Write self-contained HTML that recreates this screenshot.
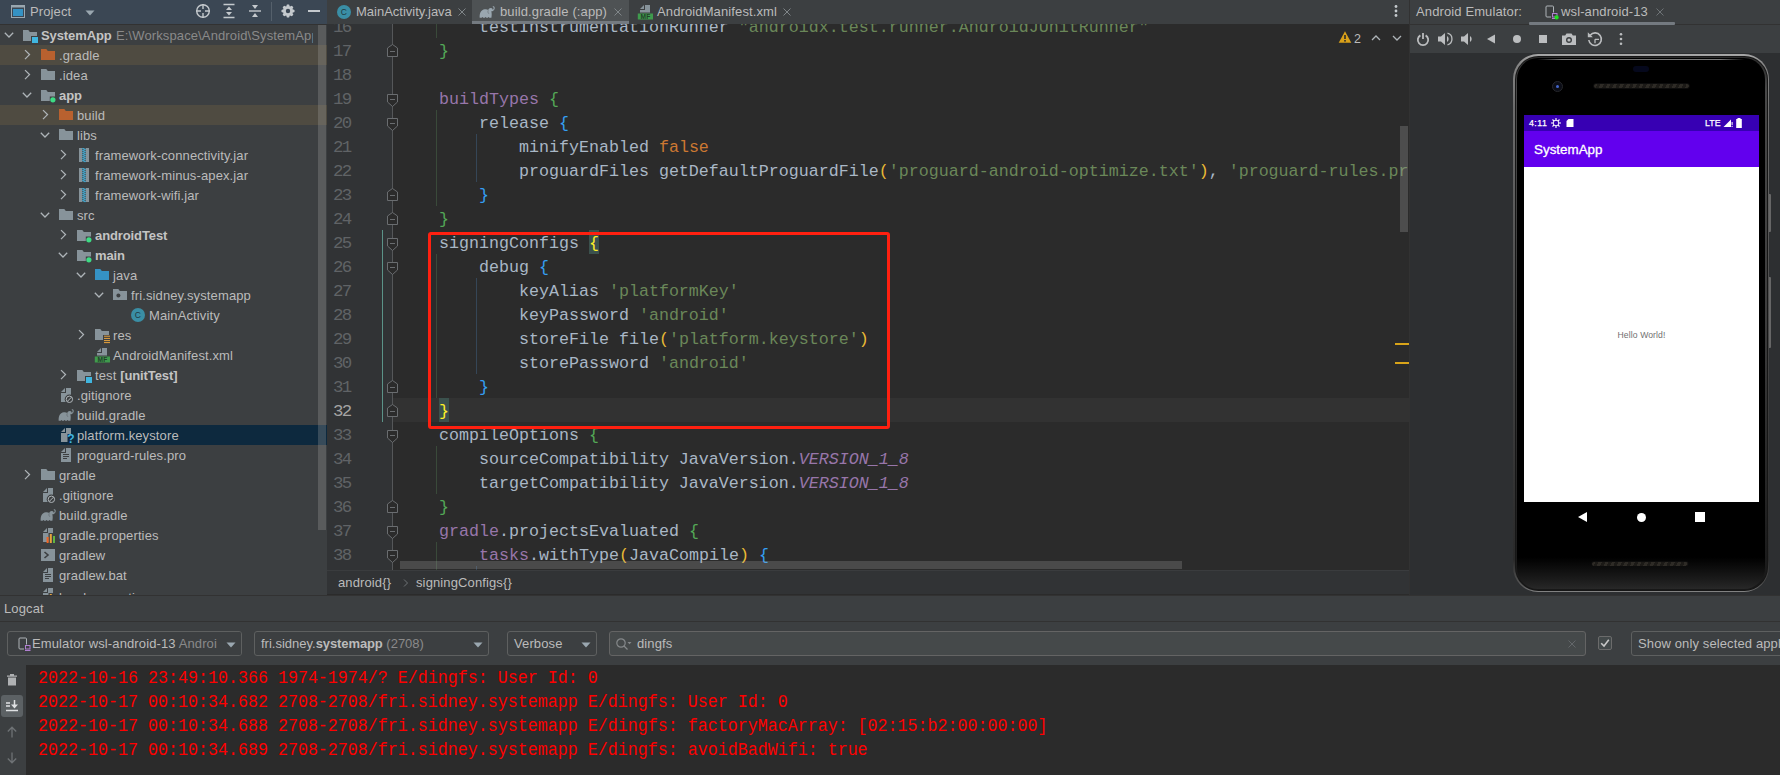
<!DOCTYPE html>
<html lang="en"><head><meta charset="utf-8"><title>SystemApp - build.gradle (:app)</title>
<style>
*{box-sizing:border-box;margin:0;padding:0}
html,body{width:1780px;height:775px;overflow:hidden;background:#3c3f41}
body{position:relative;font-family:"Liberation Sans",sans-serif;font-size:13px;letter-spacing:.12px;color:#bbbbbb;-webkit-font-smoothing:antialiased}
.abs{position:absolute}
svg{position:absolute;overflow:visible}
#proj{position:absolute;left:0;top:0;width:327px;height:595px;background:#3c3f41;overflow:hidden}
#projhead{position:absolute;left:0;top:0;width:327px;height:24px;background:#3b4754}
#projhead .sepline{position:absolute;left:0;top:24px;width:327px;height:1px;background:#323232}
.row{position:absolute;left:0;width:327px;height:20px;line-height:20px;white-space:nowrap}
.row.excl{background:#4f4b41}
.row.sel{background:#0d293e}
.row span.t{position:absolute;top:1px;color:#bbbbbb}
b{font-weight:bold;letter-spacing:-.1px}
.row b{color:#c4c4c4}
.gray,.row span.t.gray{color:#8a8a8a}
#projscroll{position:absolute;left:318px;top:25px;width:8px;height:505px;background:rgba(166,166,166,.28)}
#editor{position:absolute;left:327px;top:0;width:1082px;height:595px;background:#2b2b2b;overflow:hidden}
#tabs{position:absolute;left:0;top:0;width:1082px;height:24px;background:#3c3f41;z-index:5}
#tabs .tab{position:absolute;top:0;height:24px;line-height:23px;color:#bbbbbb;white-space:nowrap}
#gutter{position:absolute;left:0;top:24px;width:65px;height:546px;background:#313335}
.ln{position:absolute;left:0;width:1082px;height:24px}
.code,.num{font-family:"Liberation Mono",monospace;font-size:16.67px;line-height:24px;white-space:pre;position:absolute;top:2px;height:24px}
.code{left:72px;color:#a9b7c6;letter-spacing:0}
.num{left:6px;color:#606366;font-size:17.4px;letter-spacing:-1.7px}
.p{color:#9876aa}.k{color:#cc7832}.s{color:#6a8759}.g{color:#54a857}.bl{color:#359ff4}.y{color:#e8ba36}.m{color:#ffef28}.i{font-style:italic;color:#9876aa}
#crumbs{position:absolute;left:0;top:570px;width:1082px;height:24px;background:#313335;border-top:1px solid #3a3c3e;line-height:24px;z-index:4}
#emu{position:absolute;left:1409px;top:0;width:371px;height:595px;background:#2d2f31;overflow:hidden}
#logcat{position:absolute;left:0;top:595px;width:1780px;height:180px;background:#3c3f41;overflow:hidden}
.combo{position:absolute;top:36px;height:25px;border:1px solid #5e6060;border-radius:3px;background:#3c3f41;line-height:23px;white-space:nowrap;overflow:hidden;color:#bbbbbb}
.logline{position:absolute;left:38px;font-family:"Liberation Mono",monospace;font-size:16.67px;line-height:24px;height:24px;color:#ff0000;white-space:pre;letter-spacing:0;transform:scaleY(1.13);transform-origin:0 16.5px}
</style></head>
<body>
<div id="proj">
<div id="projhead">
<svg style="left:10px;top:4px" width="16" height="16" viewBox="0 0 16 16"><rect x="1.5" y="1.5" width="13" height="12" fill="none" stroke="#9aa7b0" stroke-width="1"/><rect x="1" y="1" width="14" height="2.5" fill="#9aa7b0"/><rect x="3" y="5" width="10" height="7" fill="#3592c4"/></svg>
<span class="abs" style="left:30px;top:0;line-height:23px;color:#bbbbbb">Project</span>
<svg style="left:85px;top:10px" width="10" height="6" viewBox="0 0 10 6"><path d="M0.5 0.5 H9.5 L5 5.5 Z" fill="#9aa7b0"/></svg>
<svg style="left:195px;top:3px" width="16" height="16" viewBox="0 0 16 16"><circle cx="8" cy="8" r="6.3" fill="none" stroke="#c4c9cd" stroke-width="1.4"/><path d="M8 1v5M8 10v5M1 8h5M10 8h5" stroke="#c4c9cd" stroke-width="1.4"/></svg>
<svg style="left:221px;top:3px" width="16" height="16" viewBox="0 0 16 16"><path d="M2.5 1.5h11M2.5 14.5h11" stroke="#c4c9cd" stroke-width="1.4"/><path d="M8 3.5 L11 7 H5 Z M8 12.5 L11 9 H5 Z" fill="#c4c9cd"/></svg>
<svg style="left:247px;top:3px" width="16" height="16" viewBox="0 0 16 16"><path d="M2 8h12" stroke="#c4c9cd" stroke-width="1.4"/><path d="M8 6 L11 2 H5 Z M8 10 L11 14 H5 Z" fill="#c4c9cd"/></svg>
<div class="abs" style="left:271px;top:2px;width:1px;height:19px;background:#55606b"></div>
<svg style="left:280px;top:3px" width="16" height="16" viewBox="0 0 16 16"><path d="M12.56 6.21 L14.51 6.92 L14.51 9.08 L12.56 9.79 L12.49 9.96 L13.37 11.84 L11.84 13.37 L9.96 12.49 L9.79 12.56 L9.08 14.51 L6.92 14.51 L6.21 12.56 L6.04 12.49 L4.16 13.37 L2.63 11.84 L3.51 9.96 L3.44 9.79 L1.49 9.08 L1.49 6.92 L3.44 6.21 L3.51 6.04 L2.63 4.16 L4.16 2.63 L6.04 3.51 L6.21 3.44 L6.92 1.49 L9.08 1.49 L9.79 3.44 L9.96 3.51 L11.84 2.63 L13.37 4.16 L12.49 6.04 Z M8 5.8 A2.2 2.2 0 1 0 8 10.2 A2.2 2.2 0 1 0 8 5.8 Z" fill="#c4c9cd" fill-rule="evenodd"/></svg>
<div class="abs" style="left:308px;top:10px;width:12px;height:2px;background:#c4c9cd"></div>
<div class="sepline"></div>
</div>
<div class="row " style="top:25px">
<svg style="left:1px;top:2px" width="16" height="16" viewBox="0 0 16 16"><path d="M3.8 5.8 L8 10 L12.2 5.8" fill="none" stroke="#aeb4b8" stroke-width="1.3"/></svg>
<svg style="left:22px;top:2px" width="16" height="16" viewBox="0 0 16 16"><path d="M1 3 H6.3 L7.8 5 H15 V9 H9 V14 H1 Z" fill="#87939a"/><rect x="10" y="10" width="6" height="6" fill="#40b6e0"/></svg>
<span class="t" style="left:41px"><b>SystemApp</b></span>
<span class="t gray" style="left:116px;width:197px;overflow:hidden">E:\Workspace\Android\SystemApp</span>
</div>
<div class="row excl" style="top:45px">
<svg style="left:19px;top:2px" width="16" height="16" viewBox="0 0 16 16"><path d="M6 3.1 L10.5 7.6 L6 12.1" fill="none" stroke="#aeb4b8" stroke-width="1.3"/></svg>
<svg style="left:40px;top:2px" width="16" height="16" viewBox="0 0 16 16"><path d="M1 2 H6.3 L7.8 4 H15 V13 H1 Z" fill="#b9612f"/></svg>
<span class="t" style="left:59px">.gradle</span>
</div>
<div class="row " style="top:65px">
<svg style="left:19px;top:2px" width="16" height="16" viewBox="0 0 16 16"><path d="M6 3.1 L10.5 7.6 L6 12.1" fill="none" stroke="#aeb4b8" stroke-width="1.3"/></svg>
<svg style="left:40px;top:2px" width="16" height="16" viewBox="0 0 16 16"><path d="M1 2 H6.3 L7.8 4 H15 V13 H1 Z" fill="#87939a"/></svg>
<span class="t" style="left:59px">.idea</span>
</div>
<div class="row " style="top:85px">
<svg style="left:19px;top:2px" width="16" height="16" viewBox="0 0 16 16"><path d="M3.8 5.8 L8 10 L12.2 5.8" fill="none" stroke="#aeb4b8" stroke-width="1.3"/></svg>
<svg style="left:40px;top:2px" width="16" height="16" viewBox="0 0 16 16"><path d="M1 3 H6.3 L7.8 5 H15 V9.4 H9.8 V14 H1 Z" fill="#87939a"/><circle cx="12.9" cy="12.8" r="2.6" fill="#3ddc84"/></svg>
<span class="t" style="left:59px"><b>app</b></span>
</div>
<div class="row excl" style="top:105px">
<svg style="left:37px;top:2px" width="16" height="16" viewBox="0 0 16 16"><path d="M6 3.1 L10.5 7.6 L6 12.1" fill="none" stroke="#aeb4b8" stroke-width="1.3"/></svg>
<svg style="left:58px;top:2px" width="16" height="16" viewBox="0 0 16 16"><path d="M1 2 H6.3 L7.8 4 H15 V13 H1 Z" fill="#b9612f"/></svg>
<span class="t" style="left:77px">build</span>
</div>
<div class="row " style="top:125px">
<svg style="left:37px;top:2px" width="16" height="16" viewBox="0 0 16 16"><path d="M3.8 5.8 L8 10 L12.2 5.8" fill="none" stroke="#aeb4b8" stroke-width="1.3"/></svg>
<svg style="left:58px;top:2px" width="16" height="16" viewBox="0 0 16 16"><path d="M1 2 H6.3 L7.8 4 H15 V13 H1 Z" fill="#87939a"/></svg>
<span class="t" style="left:77px">libs</span>
</div>
<div class="row " style="top:145px">
<svg style="left:55px;top:2px" width="16" height="16" viewBox="0 0 16 16"><path d="M6 3.1 L10.5 7.6 L6 12.1" fill="none" stroke="#aeb4b8" stroke-width="1.3"/></svg>
<svg style="left:76px;top:2px" width="16" height="16" viewBox="0 0 16 16"><rect x="3" y="1" width="3" height="14" fill="#87939a"/><rect x="10" y="1" width="3" height="14" fill="#87939a"/><rect x="6" y="1" width="4" height="14" fill="#4c5a63"/><path d="M6.2 1.6h2.2" stroke="#40b6e0" stroke-width="0.9"/><path d="M7.6 2.6h2.2" stroke="#40b6e0" stroke-width="0.9"/><path d="M6.2 3.6h2.2" stroke="#40b6e0" stroke-width="0.9"/><path d="M7.6 4.6h2.2" stroke="#40b6e0" stroke-width="0.9"/><path d="M6.2 5.6h2.2" stroke="#40b6e0" stroke-width="0.9"/><path d="M7.6 6.6h2.2" stroke="#40b6e0" stroke-width="0.9"/><path d="M6.2 7.6h2.2" stroke="#40b6e0" stroke-width="0.9"/><path d="M7.6 8.6h2.2" stroke="#40b6e0" stroke-width="0.9"/><path d="M6.2 9.6h2.2" stroke="#40b6e0" stroke-width="0.9"/><path d="M7.6 10.6h2.2" stroke="#40b6e0" stroke-width="0.9"/><path d="M6.2 11.6h2.2" stroke="#40b6e0" stroke-width="0.9"/><path d="M7.6 12.6h2.2" stroke="#40b6e0" stroke-width="0.9"/><path d="M6.2 13.6h2.2" stroke="#40b6e0" stroke-width="0.9"/><path d="M7.6 14.6h2.2" stroke="#40b6e0" stroke-width="0.9"/></svg>
<span class="t" style="left:95px">framework-connectivity.jar</span>
</div>
<div class="row " style="top:165px">
<svg style="left:55px;top:2px" width="16" height="16" viewBox="0 0 16 16"><path d="M6 3.1 L10.5 7.6 L6 12.1" fill="none" stroke="#aeb4b8" stroke-width="1.3"/></svg>
<svg style="left:76px;top:2px" width="16" height="16" viewBox="0 0 16 16"><rect x="3" y="1" width="3" height="14" fill="#87939a"/><rect x="10" y="1" width="3" height="14" fill="#87939a"/><rect x="6" y="1" width="4" height="14" fill="#4c5a63"/><path d="M6.2 1.6h2.2" stroke="#40b6e0" stroke-width="0.9"/><path d="M7.6 2.6h2.2" stroke="#40b6e0" stroke-width="0.9"/><path d="M6.2 3.6h2.2" stroke="#40b6e0" stroke-width="0.9"/><path d="M7.6 4.6h2.2" stroke="#40b6e0" stroke-width="0.9"/><path d="M6.2 5.6h2.2" stroke="#40b6e0" stroke-width="0.9"/><path d="M7.6 6.6h2.2" stroke="#40b6e0" stroke-width="0.9"/><path d="M6.2 7.6h2.2" stroke="#40b6e0" stroke-width="0.9"/><path d="M7.6 8.6h2.2" stroke="#40b6e0" stroke-width="0.9"/><path d="M6.2 9.6h2.2" stroke="#40b6e0" stroke-width="0.9"/><path d="M7.6 10.6h2.2" stroke="#40b6e0" stroke-width="0.9"/><path d="M6.2 11.6h2.2" stroke="#40b6e0" stroke-width="0.9"/><path d="M7.6 12.6h2.2" stroke="#40b6e0" stroke-width="0.9"/><path d="M6.2 13.6h2.2" stroke="#40b6e0" stroke-width="0.9"/><path d="M7.6 14.6h2.2" stroke="#40b6e0" stroke-width="0.9"/></svg>
<span class="t" style="left:95px">framework-minus-apex.jar</span>
</div>
<div class="row " style="top:185px">
<svg style="left:55px;top:2px" width="16" height="16" viewBox="0 0 16 16"><path d="M6 3.1 L10.5 7.6 L6 12.1" fill="none" stroke="#aeb4b8" stroke-width="1.3"/></svg>
<svg style="left:76px;top:2px" width="16" height="16" viewBox="0 0 16 16"><rect x="3" y="1" width="3" height="14" fill="#87939a"/><rect x="10" y="1" width="3" height="14" fill="#87939a"/><rect x="6" y="1" width="4" height="14" fill="#4c5a63"/><path d="M6.2 1.6h2.2" stroke="#40b6e0" stroke-width="0.9"/><path d="M7.6 2.6h2.2" stroke="#40b6e0" stroke-width="0.9"/><path d="M6.2 3.6h2.2" stroke="#40b6e0" stroke-width="0.9"/><path d="M7.6 4.6h2.2" stroke="#40b6e0" stroke-width="0.9"/><path d="M6.2 5.6h2.2" stroke="#40b6e0" stroke-width="0.9"/><path d="M7.6 6.6h2.2" stroke="#40b6e0" stroke-width="0.9"/><path d="M6.2 7.6h2.2" stroke="#40b6e0" stroke-width="0.9"/><path d="M7.6 8.6h2.2" stroke="#40b6e0" stroke-width="0.9"/><path d="M6.2 9.6h2.2" stroke="#40b6e0" stroke-width="0.9"/><path d="M7.6 10.6h2.2" stroke="#40b6e0" stroke-width="0.9"/><path d="M6.2 11.6h2.2" stroke="#40b6e0" stroke-width="0.9"/><path d="M7.6 12.6h2.2" stroke="#40b6e0" stroke-width="0.9"/><path d="M6.2 13.6h2.2" stroke="#40b6e0" stroke-width="0.9"/><path d="M7.6 14.6h2.2" stroke="#40b6e0" stroke-width="0.9"/></svg>
<span class="t" style="left:95px">framework-wifi.jar</span>
</div>
<div class="row " style="top:205px">
<svg style="left:37px;top:2px" width="16" height="16" viewBox="0 0 16 16"><path d="M3.8 5.8 L8 10 L12.2 5.8" fill="none" stroke="#aeb4b8" stroke-width="1.3"/></svg>
<svg style="left:58px;top:2px" width="16" height="16" viewBox="0 0 16 16"><path d="M1 2 H6.3 L7.8 4 H15 V13 H1 Z" fill="#87939a"/></svg>
<span class="t" style="left:77px">src</span>
</div>
<div class="row " style="top:225px">
<svg style="left:55px;top:2px" width="16" height="16" viewBox="0 0 16 16"><path d="M6 3.1 L10.5 7.6 L6 12.1" fill="none" stroke="#aeb4b8" stroke-width="1.3"/></svg>
<svg style="left:76px;top:2px" width="16" height="16" viewBox="0 0 16 16"><path d="M1 3 H6.3 L7.8 5 H15 V9.4 H9.8 V14 H1 Z" fill="#87939a"/><circle cx="12.9" cy="12.8" r="2.6" fill="#3ddc84"/></svg>
<span class="t" style="left:95px"><b>androidTest</b></span>
</div>
<div class="row " style="top:245px">
<svg style="left:55px;top:2px" width="16" height="16" viewBox="0 0 16 16"><path d="M3.8 5.8 L8 10 L12.2 5.8" fill="none" stroke="#aeb4b8" stroke-width="1.3"/></svg>
<svg style="left:76px;top:2px" width="16" height="16" viewBox="0 0 16 16"><path d="M1 3 H6.3 L7.8 5 H15 V9.4 H9.8 V14 H1 Z" fill="#87939a"/><circle cx="12.9" cy="12.8" r="2.6" fill="#3ddc84"/></svg>
<span class="t" style="left:95px"><b>main</b></span>
</div>
<div class="row " style="top:265px">
<svg style="left:73px;top:2px" width="16" height="16" viewBox="0 0 16 16"><path d="M3.8 5.8 L8 10 L12.2 5.8" fill="none" stroke="#aeb4b8" stroke-width="1.3"/></svg>
<svg style="left:94px;top:2px" width="16" height="16" viewBox="0 0 16 16"><path d="M1 2 H6.3 L7.8 4 H15 V13 H1 Z" fill="#3592c4"/></svg>
<span class="t" style="left:113px">java</span>
</div>
<div class="row " style="top:285px">
<svg style="left:91px;top:2px" width="16" height="16" viewBox="0 0 16 16"><path d="M3.8 5.8 L8 10 L12.2 5.8" fill="none" stroke="#aeb4b8" stroke-width="1.3"/></svg>
<svg style="left:112px;top:2px" width="16" height="16" viewBox="0 0 16 16"><path d="M1 2 H6.3 L7.8 4 H15 V13 H1 Z" fill="#87939a"/><circle cx="6.4" cy="8.6" r="2" fill="#3c3f41"/></svg>
<span class="t" style="left:131px">fri.sidney.systemapp</span>
</div>
<div class="row " style="top:305px">
<svg style="left:130px;top:2px" width="16" height="16" viewBox="0 0 16 16"><circle cx="8" cy="8" r="7" fill="#3a8ea5"/><text x="8" y="11" text-anchor="middle" font-family="Liberation Sans,sans-serif" font-size="8.5" fill="#1f3840">C</text></svg>
<span class="t" style="left:149px">MainActivity</span>
</div>
<div class="row " style="top:325px">
<svg style="left:73px;top:2px" width="16" height="16" viewBox="0 0 16 16"><path d="M6 3.1 L10.5 7.6 L6 12.1" fill="none" stroke="#aeb4b8" stroke-width="1.3"/></svg>
<svg style="left:94px;top:2px" width="16" height="16" viewBox="0 0 16 16"><path d="M1 2 H6.3 L7.8 4 H15 V8 H9 V13 H1 Z" fill="#87939a"/><path d="M10 9.2h6M10 11.4h6M10 13.6h6M10 15.6h6" stroke="#e8a33d" stroke-width="1"/></svg>
<span class="t" style="left:113px">res</span>
</div>
<div class="row " style="top:345px">
<svg style="left:94px;top:2px" width="16" height="16" viewBox="0 0 16 16"><path d="M8 1 H13 V8.4 H3 V6 H8 Z" fill="#87939a"/><path d="M7 1 V5 H3 Z" fill="#87939a"/><rect x="0.8" y="9.5" width="15.2" height="6" fill="#3f9b4d"/><text x="8.4" y="15.1" text-anchor="middle" font-family="Liberation Sans,sans-serif" font-size="6.6" font-weight="bold" fill="#23402a">MF</text></svg>
<span class="t" style="left:113px">AndroidManifest.xml</span>
</div>
<div class="row " style="top:365px">
<svg style="left:55px;top:2px" width="16" height="16" viewBox="0 0 16 16"><path d="M6 3.1 L10.5 7.6 L6 12.1" fill="none" stroke="#aeb4b8" stroke-width="1.3"/></svg>
<svg style="left:76px;top:2px" width="16" height="16" viewBox="0 0 16 16"><path d="M1 3 H6.3 L7.8 5 H15 V9 H9 V14 H1 Z" fill="#87939a"/><rect x="10" y="10" width="6" height="6" fill="#40b6e0"/></svg>
<span class="t" style="left:95px">test <b>[unitTest]</b></span>
</div>
<div class="row " style="top:385px">
<svg style="left:58px;top:2px" width="16" height="16" viewBox="0 0 16 16"><path d="M8 1 H13 V15 H3 V6 H8 Z" fill="#87939a"/><path d="M7 1 V5 H3 Z" fill="#87939a"/><circle cx="11.4" cy="12.3" r="4.7" fill="#3c3f41"/><circle cx="11.4" cy="12.3" r="3.2" fill="none" stroke="#aeb4b8" stroke-width="1"/><path d="M9.2 14.5 L13.6 10.1" stroke="#aeb4b8" stroke-width="1"/></svg>
<span class="t" style="left:77px">.gitignore</span>
</div>
<div class="row " style="top:405px">
<svg style="left:58px;top:2px" width="16" height="16" viewBox="0 0 16 16"><path d="M0.7 13.7 C0.3 9.6 1.9 5.6 5.8 5.2 C7.2 5 8.4 5.3 9.2 6 C9.6 4.7 10.8 3.9 12.1 4.1 C13 4.3 13.6 4.9 13.7 5.7 C14.4 5.4 14.8 4.6 14.6 3.7 C14.5 3.1 14 2.8 13.6 2.9 C13.5 2.3 14.2 2 14.8 2.3 C15.7 2.8 16 4.1 15.5 5.3 C14.9 6.7 13.6 7.4 12.3 7.3 C12.9 9.2 12.8 11.6 12.4 13.7 H10.2 C10.2 12.6 9 12.6 9 13.7 H7.2 C7.2 12.6 6 12.6 6 13.7 H4 C4 12.6 2.8 12.6 2.8 13.7 Z" fill="#87939a"/><path d="M9.3 6.2 C8.6 7.6 8.9 9 10 9.8" fill="none" stroke="#3c3f41" stroke-width="0.6" opacity=".6"/></svg>
<span class="t" style="left:77px">build.gradle</span>
</div>
<div class="row sel" style="top:425px">
<svg style="left:58px;top:2px" width="16" height="16" viewBox="0 0 16 16"><path d="M8 1 H13 V7 H9.5 V15 H3 V6 H8 Z" fill="#87939a"/><path d="M7 1 V5 H3 Z" fill="#87939a"/><text x="13" y="16" text-anchor="middle" font-family="Liberation Sans,sans-serif" font-size="12" font-weight="bold" fill="#40b6e0">?</text></svg>
<span class="t" style="left:77px">platform.keystore</span>
</div>
<div class="row " style="top:445px">
<svg style="left:58px;top:2px" width="16" height="16" viewBox="0 0 16 16"><path d="M8 1 H13 V15 H3 V6 H8 Z" fill="#87939a"/><path d="M7 1 V5 H3 Z" fill="#87939a"/><path d="M5 7.5h6M5 9.5h6M5 11.5h4" stroke="#3c3f41" stroke-width="1"/></svg>
<span class="t" style="left:77px">proguard-rules.pro</span>
</div>
<div class="row " style="top:465px">
<svg style="left:19px;top:2px" width="16" height="16" viewBox="0 0 16 16"><path d="M6 3.1 L10.5 7.6 L6 12.1" fill="none" stroke="#aeb4b8" stroke-width="1.3"/></svg>
<svg style="left:40px;top:2px" width="16" height="16" viewBox="0 0 16 16"><path d="M1 2 H6.3 L7.8 4 H15 V13 H1 Z" fill="#87939a"/></svg>
<span class="t" style="left:59px">gradle</span>
</div>
<div class="row " style="top:485px">
<svg style="left:40px;top:2px" width="16" height="16" viewBox="0 0 16 16"><path d="M8 1 H13 V15 H3 V6 H8 Z" fill="#87939a"/><path d="M7 1 V5 H3 Z" fill="#87939a"/><circle cx="11.4" cy="12.3" r="4.7" fill="#3c3f41"/><circle cx="11.4" cy="12.3" r="3.2" fill="none" stroke="#aeb4b8" stroke-width="1"/><path d="M9.2 14.5 L13.6 10.1" stroke="#aeb4b8" stroke-width="1"/></svg>
<span class="t" style="left:59px">.gitignore</span>
</div>
<div class="row " style="top:505px">
<svg style="left:40px;top:2px" width="16" height="16" viewBox="0 0 16 16"><path d="M0.7 13.7 C0.3 9.6 1.9 5.6 5.8 5.2 C7.2 5 8.4 5.3 9.2 6 C9.6 4.7 10.8 3.9 12.1 4.1 C13 4.3 13.6 4.9 13.7 5.7 C14.4 5.4 14.8 4.6 14.6 3.7 C14.5 3.1 14 2.8 13.6 2.9 C13.5 2.3 14.2 2 14.8 2.3 C15.7 2.8 16 4.1 15.5 5.3 C14.9 6.7 13.6 7.4 12.3 7.3 C12.9 9.2 12.8 11.6 12.4 13.7 H10.2 C10.2 12.6 9 12.6 9 13.7 H7.2 C7.2 12.6 6 12.6 6 13.7 H4 C4 12.6 2.8 12.6 2.8 13.7 Z" fill="#87939a"/><path d="M9.3 6.2 C8.6 7.6 8.9 9 10 9.8" fill="none" stroke="#3c3f41" stroke-width="0.6" opacity=".6"/></svg>
<span class="t" style="left:59px">build.gradle</span>
</div>
<div class="row " style="top:525px">
<svg style="left:40px;top:2px" width="16" height="16" viewBox="0 0 16 16"><path d="M8 1 H13 V6 H8.5 V15 H3 V6 H8 Z" fill="#87939a"/><path d="M7 1 V5 H3 Z" fill="#87939a"/><rect x="6.6" y="10" width="2" height="6" fill="#f26522"/><rect x="9.8" y="7" width="2" height="9" fill="#e8a33d"/><rect x="13" y="9" width="2" height="7" fill="#62b543"/></svg>
<span class="t" style="left:59px">gradle.properties</span>
</div>
<div class="row " style="top:545px">
<svg style="left:40px;top:2px" width="16" height="16" viewBox="0 0 16 16"><rect x="1" y="2" width="14" height="12" fill="#87939a"/><path d="M4.5 5 L8 8 L4.5 11" fill="none" stroke="#3c3f41" stroke-width="1.6"/></svg>
<span class="t" style="left:59px">gradlew</span>
</div>
<div class="row " style="top:565px">
<svg style="left:40px;top:2px" width="16" height="16" viewBox="0 0 16 16"><path d="M8 1 H13 V15 H3 V6 H8 Z" fill="#87939a"/><path d="M7 1 V5 H3 Z" fill="#87939a"/><path d="M5 7.5h6M5 9.5h6M5 11.5h4" stroke="#3c3f41" stroke-width="1"/></svg>
<span class="t" style="left:59px">gradlew.bat</span>
</div>
<div class="row " style="top:585px">
<svg style="left:40px;top:2px" width="16" height="16" viewBox="0 0 16 16"><path d="M8 1 H13 V6 H8.5 V15 H3 V6 H8 Z" fill="#87939a"/><path d="M7 1 V5 H3 Z" fill="#87939a"/><rect x="6.6" y="10" width="2" height="6" fill="#f26522"/><rect x="9.8" y="7" width="2" height="9" fill="#e8a33d"/><rect x="13" y="9" width="2" height="7" fill="#62b543"/></svg>
<span class="t" style="left:59px;top:3px">local.properties</span>
</div>
<div id="projscroll"></div>
</div>
<div id="editor">
<div id="gutter"></div>
<div class="abs" style="left:65px;top:398px;width:1017px;height:24px;background:#323232"></div>
<div class="abs" style="left:262px;top:230px;width:10px;height:24px;background:#3b514d"></div>
<div class="abs" style="left:112px;top:398px;width:10px;height:24px;background:#3b514d"></div>
<div class="abs" style="left:55px;top:230px;width:1px;height:192px;background:#5b9388"></div>
<div class="abs" style="left:109px;top:14px;width:1px;height:24px;background:#3a4a3a"></div>
<div class="abs" style="left:109px;top:110px;width:1px;height:96px;background:#3a4a3a"></div>
<div class="abs" style="left:149px;top:134px;width:1px;height:48px;background:#354657"></div>
<div class="abs" style="left:109px;top:254px;width:1px;height:144px;background:#3a4a3a"></div>
<div class="abs" style="left:149px;top:278px;width:1px;height:96px;background:#354657"></div>
<div class="abs" style="left:109px;top:446px;width:1px;height:48px;background:#3a4a3a"></div>
<div class="abs" style="left:109px;top:542px;width:1px;height:48px;background:#3a4a3a"></div>
<div class="abs" style="left:149px;top:566px;width:1px;height:24px;background:#354657"></div>
<div class="ln" style="top:14px"><span class="num">16</span><span class="code">        testInstrumentationRunner <span class="s">"androidx.test.runner.AndroidJUnitRunner"</span></span></div>
<div class="ln" style="top:38px"><span class="num">17</span><span class="code">    <span class="g">}</span></span></div>
<div class="ln" style="top:62px"><span class="num">18</span><span class="code"></span></div>
<div class="ln" style="top:86px"><span class="num">19</span><span class="code">    <span class="p">buildTypes</span> <span class="g">{</span></span></div>
<div class="ln" style="top:110px"><span class="num">20</span><span class="code">        release <span class="bl">{</span></span></div>
<div class="ln" style="top:134px"><span class="num">21</span><span class="code">            minifyEnabled <span class="k">false</span></span></div>
<div class="ln" style="top:158px"><span class="num">22</span><span class="code">            proguardFiles getDefaultProguardFile<span class="y">(</span><span class="s">'proguard-android-optimize.txt'</span><span class="y">)</span>, <span class="s">'proguard-rules.pro'</span></span></div>
<div class="ln" style="top:182px"><span class="num">23</span><span class="code">        <span class="bl">}</span></span></div>
<div class="ln" style="top:206px"><span class="num">24</span><span class="code">    <span class="g">}</span></span></div>
<div class="ln" style="top:230px"><span class="num">25</span><span class="code">    signingConfigs <span class="m">{</span></span></div>
<div class="ln" style="top:254px"><span class="num">26</span><span class="code">        debug <span class="bl">{</span></span></div>
<div class="ln" style="top:278px"><span class="num">27</span><span class="code">            keyAlias <span class="s">'platformKey'</span></span></div>
<div class="ln" style="top:302px"><span class="num">28</span><span class="code">            keyPassword <span class="s">'android'</span></span></div>
<div class="ln" style="top:326px"><span class="num">29</span><span class="code">            storeFile file<span class="y">(</span><span class="s">'platform.keystore'</span><span class="y">)</span></span></div>
<div class="ln" style="top:350px"><span class="num">30</span><span class="code">            storePassword <span class="s">'android'</span></span></div>
<div class="ln" style="top:374px"><span class="num">31</span><span class="code">        <span class="bl">}</span></span></div>
<div class="ln" style="top:398px"><span class="num" style="color:#a4a3a3">32</span><span class="code">    <span class="m">}</span></span></div>
<div class="ln" style="top:422px"><span class="num">33</span><span class="code">    compileOptions <span class="g">{</span></span></div>
<div class="ln" style="top:446px"><span class="num">34</span><span class="code">        sourceCompatibility JavaVersion.<span class="i">VERSION_1_8</span></span></div>
<div class="ln" style="top:470px"><span class="num">35</span><span class="code">        targetCompatibility JavaVersion.<span class="i">VERSION_1_8</span></span></div>
<div class="ln" style="top:494px"><span class="num">36</span><span class="code">    <span class="g">}</span></span></div>
<div class="ln" style="top:518px"><span class="num">37</span><span class="code">    <span class="p">gradle</span>.projectsEvaluated <span class="g">{</span></span></div>
<div class="ln" style="top:542px"><span class="num">38</span><span class="code">        <span class="p">tasks</span>.withType<span class="y">(</span>JavaCompile<span class="y">)</span> <span class="bl">{</span></span></div>
<div class="ln" style="top:566px"><span class="num">39</span><span class="code">            options.compilerArgs</span></div>
<svg style="left:0;top:0" width="80" height="595" viewBox="0 0 80 595"><path d="M65.5 24V570" stroke="#555759" stroke-width="1"/><path d="M60.5 56.5 H70.5 V48 L65.5 44.5 L60.5 48 Z" fill="#2b2b2b" stroke="#6a6d70" stroke-width="1"/><path d="M63.0 51.5h5" stroke="#6a6d70" stroke-width="1"/><path d="M60.5 94.5 H70.5 V102 L65.5 106.5 L60.5 102 Z" fill="#2b2b2b" stroke="#6a6d70" stroke-width="1"/><path d="M63.0 99.5h5" stroke="#6a6d70" stroke-width="1"/><path d="M60.5 118.5 H70.5 V126 L65.5 130.5 L60.5 126 Z" fill="#2b2b2b" stroke="#6a6d70" stroke-width="1"/><path d="M63.0 123.5h5" stroke="#6a6d70" stroke-width="1"/><path d="M60.5 200.5 H70.5 V192 L65.5 188.5 L60.5 192 Z" fill="#2b2b2b" stroke="#6a6d70" stroke-width="1"/><path d="M63.0 195.5h5" stroke="#6a6d70" stroke-width="1"/><path d="M60.5 224.5 H70.5 V216 L65.5 212.5 L60.5 216 Z" fill="#2b2b2b" stroke="#6a6d70" stroke-width="1"/><path d="M63.0 219.5h5" stroke="#6a6d70" stroke-width="1"/><path d="M60.5 238.5 H70.5 V246 L65.5 250.5 L60.5 246 Z" fill="#2b2b2b" stroke="#6a6d70" stroke-width="1"/><path d="M63.0 243.5h5" stroke="#6a6d70" stroke-width="1"/><path d="M60.5 262.5 H70.5 V270 L65.5 274.5 L60.5 270 Z" fill="#2b2b2b" stroke="#6a6d70" stroke-width="1"/><path d="M63.0 267.5h5" stroke="#6a6d70" stroke-width="1"/><path d="M60.5 392.5 H70.5 V384 L65.5 380.5 L60.5 384 Z" fill="#2b2b2b" stroke="#6a6d70" stroke-width="1"/><path d="M63.0 387.5h5" stroke="#6a6d70" stroke-width="1"/><path d="M60.5 416.5 H70.5 V408 L65.5 404.5 L60.5 408 Z" fill="#2b2b2b" stroke="#6a6d70" stroke-width="1"/><path d="M63.0 411.5h5" stroke="#6a6d70" stroke-width="1"/><path d="M60.5 430.5 H70.5 V438 L65.5 442.5 L60.5 438 Z" fill="#2b2b2b" stroke="#6a6d70" stroke-width="1"/><path d="M63.0 435.5h5" stroke="#6a6d70" stroke-width="1"/><path d="M60.5 512.5 H70.5 V504 L65.5 500.5 L60.5 504 Z" fill="#2b2b2b" stroke="#6a6d70" stroke-width="1"/><path d="M63.0 507.5h5" stroke="#6a6d70" stroke-width="1"/><path d="M60.5 526.5 H70.5 V534 L65.5 538.5 L60.5 534 Z" fill="#2b2b2b" stroke="#6a6d70" stroke-width="1"/><path d="M63.0 531.5h5" stroke="#6a6d70" stroke-width="1"/><path d="M60.5 550.5 H70.5 V558 L65.5 562.5 L60.5 558 Z" fill="#2b2b2b" stroke="#6a6d70" stroke-width="1"/><path d="M63.0 555.5h5" stroke="#6a6d70" stroke-width="1"/></svg>
<div class="abs" style="left:101px;top:232px;width:462px;height:197px;border:3px solid #ff2010;border-radius:3px"></div>
<svg style="left:1011px;top:30px" width="14" height="14" viewBox="0 0 14 14"><path d="M7 1.2 L13.3 12.8 H0.7 Z" fill="#d9a019"/><rect x="6.2" y="5" width="1.6" height="4" fill="#2b2b2b"/><rect x="6.2" y="10" width="1.6" height="1.6" fill="#2b2b2b"/></svg>
<span class="abs" style="left:1027px;top:31px;line-height:16px;font-size:12.5px;color:#bbbbbb">2</span>
<svg style="left:1043px;top:32px" width="12" height="12" viewBox="0 0 12 12"><path d="M2 8 L6 4 L10 8" fill="none" stroke="#aeb4b8" stroke-width="1.3"/></svg>
<svg style="left:1064px;top:32px" width="12" height="12" viewBox="0 0 12 12"><path d="M2 4 L6 8 L10 4" fill="none" stroke="#aeb4b8" stroke-width="1.3"/></svg>
<div class="abs" style="left:1073px;top:126px;width:8px;height:106px;background:rgba(166,166,166,.28)"></div>
<div class="abs" style="left:1068px;top:343px;width:14px;height:2px;background:#d9a419"></div>
<div class="abs" style="left:1068px;top:362px;width:14px;height:2px;background:#d9a419"></div>
<div class="abs" style="left:73px;top:561px;width:782px;height:8px;background:rgba(166,166,166,.26);z-index:3"></div>
<div id="crumbs"><span class="abs" style="left:11px;color:#bbbbbb">android{}</span>
<svg style="left:74px;top:7px" width="10" height="10" viewBox="0 0 10 10"><path d="M3 1.5 L6.5 5 L3 8.5" fill="none" stroke="#6e7376" stroke-width="1"/></svg>
<span class="abs" style="left:89px;color:#bbbbbb">signingConfigs{}</span></div>
<div id="tabs">
<div class="abs" style="left:145px;top:0;width:157px;height:24px;background:#4e5254"></div>
<div class="abs" style="left:145px;top:21px;width:157px;height:3px;background:#747a80"></div>
<svg style="left:9px;top:4px" width="16" height="16" viewBox="0 0 16 16"><circle cx="8" cy="8" r="7" fill="#3a8ea5"/><text x="8" y="11" text-anchor="middle" font-family="Liberation Sans,sans-serif" font-size="8.5" fill="#1f3840">C</text></svg>
<span class="tab" style="left:29px;letter-spacing:0">MainActivity.java</span>
<svg style="left:130px;top:7px" width="10" height="10" viewBox="0 0 10 10"><path d="M1.5 1.5l7 7M8.5 1.5l-7 7" stroke="#7f8588" stroke-width="1"/></svg>
<svg style="left:152px;top:4px" width="16" height="16" viewBox="0 0 16 16"><path d="M0.7 13.7 C0.3 9.6 1.9 5.6 5.8 5.2 C7.2 5 8.4 5.3 9.2 6 C9.6 4.7 10.8 3.9 12.1 4.1 C13 4.3 13.6 4.9 13.7 5.7 C14.4 5.4 14.8 4.6 14.6 3.7 C14.5 3.1 14 2.8 13.6 2.9 C13.5 2.3 14.2 2 14.8 2.3 C15.7 2.8 16 4.1 15.5 5.3 C14.9 6.7 13.6 7.4 12.3 7.3 C12.9 9.2 12.8 11.6 12.4 13.7 H10.2 C10.2 12.6 9 12.6 9 13.7 H7.2 C7.2 12.6 6 12.6 6 13.7 H4 C4 12.6 2.8 12.6 2.8 13.7 Z" fill="#9aa7b0"/><path d="M9.3 6.2 C8.6 7.6 8.9 9 10 9.8" fill="none" stroke="#3c3f41" stroke-width="0.6" opacity=".6"/></svg>
<span class="tab" style="left:173px">build.gradle (:app)</span>
<svg style="left:286px;top:7px" width="10" height="10" viewBox="0 0 10 10"><path d="M1.5 1.5l7 7M8.5 1.5l-7 7" stroke="#7f8588" stroke-width="1"/></svg>
<svg style="left:310px;top:4px" width="16" height="16" viewBox="0 0 16 16"><path d="M8 1 H13 V8.4 H3 V6 H8 Z" fill="#87939a"/><path d="M7 1 V5 H3 Z" fill="#87939a"/><rect x="0.8" y="9.5" width="15.2" height="6" fill="#3f9b4d"/><text x="8.4" y="15.1" text-anchor="middle" font-family="Liberation Sans,sans-serif" font-size="6.6" font-weight="bold" fill="#23402a">MF</text></svg>
<span class="tab" style="left:330px">AndroidManifest.xml</span>
<svg style="left:455px;top:7px" width="10" height="10" viewBox="0 0 10 10"><path d="M1.5 1.5l7 7M8.5 1.5l-7 7" stroke="#7f8588" stroke-width="1"/></svg>
<svg style="left:1061px;top:3px" width="16" height="16" viewBox="0 0 16 16"><circle cx="8" cy="3.5" r="1.4" fill="#c4c9cd"/><circle cx="8" cy="8" r="1.4" fill="#c4c9cd"/><circle cx="8" cy="12.5" r="1.4" fill="#c4c9cd"/></svg>
</div>
</div>
<div id="emu">
<div class="abs" style="left:0;top:0;width:1px;height:595px;background:#323232"></div>
<div class="abs" style="left:1px;top:0;width:370px;height:53px;background:#3c3f41"></div>
<div class="abs" style="left:1px;top:24px;width:370px;height:1px;background:#323232"></div>
<span class="abs" style="left:7px;top:0;line-height:23px;color:#bbbbbb;white-space:nowrap">Android Emulator:</span>
<svg style="left:134px;top:4px" width="16" height="16" viewBox="0 0 16 16"><rect x="3" y="2" width="7.5" height="11" rx="1" fill="none" stroke="#aeb4b8" stroke-width="1"/><rect x="8" y="8.5" width="7" height="6.5" fill="#3c3f41"/><rect x="9.5" y="9.5" width="4.5" height="3.5" fill="none" stroke="#b07fd0" stroke-width="1"/><path d="M9 14.5h5" stroke="#b07fd0" stroke-width="1"/><circle cx="13.6" cy="13.4" r="2.1" fill="#1fe01f"/></svg>
<span class="abs" style="left:152px;top:0;line-height:23px;color:#bbbbbb;white-space:nowrap">wsl-android-13</span>
<svg style="left:246px;top:7px" width="10" height="10" viewBox="0 0 10 10"><path d="M1.5 1.5l7 7M8.5 1.5l-7 7" stroke="#6e7376" stroke-width="1"/></svg>
<div class="abs" style="left:120px;top:22px;width:146px;height:3px;background:#747a80;border-radius:1px"></div>
<svg style="left:6px;top:31px" width="16" height="16" viewBox="0 0 16 16"><path d="M5.4 4.4 A5.2 5.2 0 1 0 10.6 4.4" fill="none" stroke="#bbbdbf" stroke-width="1.8"/><path d="M8 2v6" stroke="#bbbdbf" stroke-width="1.8"/></svg>
<svg style="left:28px;top:31px" width="16" height="16" viewBox="0 0 16 16"><path d="M1 5.5h3l4-3.5v12l-4-3.5h-3z" fill="#bbbdbf"/><path d="M10 5a3.5 3.5 0 0 1 0 6z" fill="#bbbdbf"/><path d="M10.5 2.2a6 6 0 0 1 0 11.6" fill="none" stroke="#bbbdbf" stroke-width="1.3"/></svg>
<svg style="left:50px;top:31px" width="16" height="16" viewBox="0 0 16 16"><path d="M2 5.5h3l4-3.5v12l-4-3.5h-3z" fill="#bbbdbf"/><path d="M11 5a3.5 3.5 0 0 1 0 6z" fill="#bbbdbf"/></svg>
<svg style="left:74px;top:31px" width="16" height="16" viewBox="0 0 16 16"><path d="M12 3.5v9L4 8z" fill="#bbbdbf"/></svg>
<svg style="left:100px;top:31px" width="16" height="16" viewBox="0 0 16 16"><circle cx="8" cy="8" r="4" fill="#bbbdbf"/></svg>
<svg style="left:126px;top:31px" width="16" height="16" viewBox="0 0 16 16"><rect x="4" y="4" width="8" height="8" fill="#bbbdbf"/></svg>
<svg style="left:152px;top:31px" width="16" height="16" viewBox="0 0 16 16"><path d="M1 4.5h3.2l1.3-2h5l1.3 2H15v9.5H1z" fill="#bbbdbf"/><circle cx="8" cy="9" r="3" fill="#3c3f41"/><circle cx="8" cy="9" r="1.6" fill="#bbbdbf"/></svg>
<svg style="left:178px;top:31px" width="16" height="16" viewBox="0 0 16 16"><path d="M3.2 4.2 A6.3 6.3 0 1 1 1.8 9" fill="none" stroke="#bbbdbf" stroke-width="1.6"/><path d="M0.8 1.2 L0.8 6.2 L5.8 6.2 Z" fill="#bbbdbf"/><path d="M8 8.3h4M8 8.3v4" stroke="#bbbdbf" stroke-width="1.3"/></svg>
<svg style="left:204px;top:31px" width="16" height="16" viewBox="0 0 16 16"><circle cx="8" cy="3.2" r="1.3" fill="#bbbdbf"/><circle cx="8" cy="8" r="1.3" fill="#bbbdbf"/><circle cx="8" cy="12.8" r="1.3" fill="#bbbdbf"/></svg>
<div class="abs" style="left:359px;top:194px;width:3px;height:38px;border-radius:1px;background:#666"></div>
<div class="abs" style="left:359px;top:277px;width:3px;height:71px;border-radius:1px;background:#666"></div>
<div class="abs" style="left:104px;top:54px;width:256px;height:538px;border-radius:25px;background:linear-gradient(to bottom,#a8a8a8 0,#858585 2%,#6c6c6c 10%,#444 55%,#2a2a2a 94%,#5a5a5a 99%,#858585 100%)"></div>
<div class="abs" style="left:105.5px;top:55.5px;width:253px;height:535px;border-radius:23.5px;background:#161616"></div>
<div class="abs" style="left:106.5px;top:56.5px;width:251px;height:533.5px;border-radius:22.5px;background:linear-gradient(to bottom,#2a2a2a 0,#484848 6%,#3c3c3c 50%,#1e1e1e 90%,#181818 100%)"></div>
<div class="abs" style="left:108px;top:58px;width:248px;height:531px;border-radius:21px;background:linear-gradient(to bottom,#000 0,#000 94%,#101010 96.5%,#1d1d1d 98.5%,#282828 100%)"></div>
<div class="abs" style="left:128px;top:59px;width:208px;height:1px;background:linear-gradient(to right,rgba(140,140,140,0),rgba(150,150,150,.8) 12%,rgba(150,150,150,.8) 88%,rgba(140,140,140,0))"></div>
<div class="abs" style="left:224px;top:66px;width:16px;height:6px;border-radius:3px;background:#05081c"></div>
<div class="abs" style="left:143px;top:81px;width:11px;height:11px;border-radius:6px;background:#0b0d16;border:1px solid #26272b"></div>
<div class="abs" style="left:147px;top:85px;width:3px;height:3px;border-radius:2px;background:#4466cc"></div>
<div class="abs" style="left:184px;top:83px;width:97px;height:6px;border-radius:3px;background:repeating-linear-gradient(115deg,#2e2b26 0,#2e2b26 3px,#1c1a17 3px,#1c1a17 6px);border:1px solid #0c0c0c"></div>
<div class="abs" style="left:182px;top:561px;width:98px;height:6px;border-radius:3px;background:repeating-linear-gradient(115deg,#2e2b26 0,#2e2b26 3px,#1c1a17 3px,#1c1a17 6px);border:1px solid #0c0c0c"></div>
<div class="abs" style="left:115px;top:115px;width:235px;height:387px;background:#fff;overflow:hidden">
<div class="abs" style="left:0;top:0;width:235px;height:16px;background:#3700b3"></div>
<div class="abs" style="left:0;top:16px;width:235px;height:36px;background:#6200ee"></div>
<span class="abs" style="left:5px;top:1px;line-height:14px;font-size:8.8px;color:#fff;-webkit-text-stroke:.25px #fff;letter-spacing:.45px">4:11</span>
<svg style="left:27px;top:3px" width="10" height="10" viewBox="0 0 10 10"><circle cx="5" cy="5" r="2.8" fill="none" stroke="#fff" stroke-width="1"/><g stroke="#fff" stroke-width="1.1"><path d="M5 0v2M5 8v2M0 5h2M8 5h2M1.5 1.5l1.4 1.4M7.1 7.1l1.4 1.4M1.5 8.5l1.4-1.4M7.1 2.9l1.4-1.4"/></g></svg>
<svg style="left:41px;top:3px" width="10" height="10" viewBox="0 0 10 10"><path d="M3.5 1H8.5V9H1.5V3Z" fill="#fff"/></svg>
<span class="abs" style="left:181px;top:1px;line-height:14px;font-size:8.8px;color:#fff;-webkit-text-stroke:.25px #fff">LTE</span>
<svg style="left:199px;top:3px" width="10" height="10" viewBox="0 0 10 10"><path d="M8 1.5V9H0.5Z" fill="#fff"/><rect x="8.6" y="4" width="1" height="3.2" fill="#fff"/><rect x="8.6" y="8" width="1" height="1" fill="#fff"/></svg>
<svg style="left:211px;top:2px" width="8" height="12" viewBox="0 0 8 12"><path d="M2.5 1h3v1h1.3v9H1.2V2h1.3z" fill="#fff"/></svg>
<span class="abs" style="left:10px;top:17px;line-height:36px;font-size:13.4px;color:#fff;white-space:nowrap;letter-spacing:0;-webkit-text-stroke:.3px #fff">SystemApp</span>
<span class="abs" style="left:0;top:214px;width:235px;text-align:center;line-height:12px;font-size:8.6px;letter-spacing:.1px;color:#707070">Hello World!</span>
</div>
<svg style="left:168px;top:511px" width="12" height="12" viewBox="0 0 12 12"><path d="M10 1v10L1 6z" fill="#fff"/></svg>
<div class="abs" style="left:228px;top:513px;width:9px;height:9px;border-radius:5px;background:#fff"></div>
<div class="abs" style="left:286px;top:512px;width:10px;height:10px;background:#fff"></div>
</div>
<div id="logcat">
<div class="abs" style="left:0;top:0;width:1780px;height:1px;background:#323232"></div>
<span class="abs" style="left:4px;top:2px;line-height:23px;color:#bbbbbb">Logcat</span>
<div class="abs" style="left:0;top:26px;width:1780px;height:1px;background:#323232"></div>
<div class="combo" style="left:7px;width:235px">
<svg style="left:8px;top:4px" width="16" height="16" viewBox="0 0 16 16"><rect x="3" y="2" width="7.5" height="11" rx="1" fill="none" stroke="#aeb4b8" stroke-width="1"/><rect x="8" y="8.5" width="7" height="6.5" fill="#3c3f41"/><rect x="9.5" y="9.5" width="4.5" height="3.5" fill="none" stroke="#b07fd0" stroke-width="1"/><path d="M9 14.5h5.5" stroke="#b07fd0" stroke-width="1"/></svg>
<span class="abs" style="left:24px">Emulator wsl-android-13 <span class="gray">Androi</span></span>
<div class="abs" style="left:213px;top:0;width:20px;height:23px;background:#3c3f41"></div>
<svg style="left:218px;top:10px" width="10" height="6" viewBox="0 0 10 6"><path d="M0.5 0.5 H9.5 L5 5.5 Z" fill="#9aa7b0"/></svg></div>
<div class="combo" style="left:254px;width:235px"><span class="abs" style="left:6px;letter-spacing:0">fri.sidney.<b>systemapp</b> <span class="gray">(2708)</span></span><svg style="left:218px;top:10px" width="10" height="6" viewBox="0 0 10 6"><path d="M0.5 0.5 H9.5 L5 5.5 Z" fill="#9aa7b0"/></svg></div>
<div class="combo" style="left:507px;width:90px"><span class="abs" style="left:6px">Verbose</span><svg style="left:73px;top:10px" width="10" height="6" viewBox="0 0 10 6"><path d="M0.5 0.5 H9.5 L5 5.5 Z" fill="#9aa7b0"/></svg></div>
<div class="combo" style="left:609px;width:977px;background:#45494a;border-color:#646464">
<svg style="left:5px;top:5px" width="18" height="14" viewBox="0 0 18 14"><circle cx="6" cy="6" r="4.2" fill="none" stroke="#85888a" stroke-width="1.2"/><path d="M9 9l3.5 3.5" stroke="#85888a" stroke-width="1.2"/><path d="M12.5 5h4l-2 2.2z" fill="#85888a"/></svg>
<span class="abs" style="left:27px">dingfs</span>
<svg style="left:957px;top:7px" width="10" height="10" viewBox="0 0 10 10"><path d="M1.5 1.5l7 7M8.5 1.5l-7 7" stroke="#63676a" stroke-width="1"/></svg>
</div>
<div class="abs" style="left:1598px;top:41px;width:14px;height:14px;border:1px solid #6b6b6b;border-radius:2px;background:#43494a"></div>
<svg style="left:1598px;top:41px" width="14" height="14" viewBox="0 0 14 14"><path d="M3.2 7.2 L6 10 L10.8 3.8" fill="none" stroke="#c8c8c8" stroke-width="1.6"/></svg>
<div class="combo" style="left:1631px;width:180px"><span class="abs" style="left:6px">Show only selected application</span></div>
<div class="abs" style="left:26px;top:70px;width:1754px;height:110px;background:#2b2b2b"></div>
<div class="logline" style="top:72px">2022-10-16 23:49:10.366 1974-1974/? E/dingfs: User Id: 0</div>
<div class="logline" style="top:96px">2022-10-17 00:10:34.682 2708-2708/fri.sidney.systemapp E/dingfs: User Id: 0</div>
<div class="logline" style="top:120px">2022-10-17 00:10:34.688 2708-2708/fri.sidney.systemapp E/dingfs: factoryMacArray: [02:15:b2:00:00:00]</div>
<div class="logline" style="top:144px">2022-10-17 00:10:34.689 2708-2708/fri.sidney.systemapp E/dingfs: avoidBadWifi: true</div>
<svg style="left:4px;top:76px" width="16" height="16" viewBox="0 0 16 16"><path d="M3 4.5h10v1.2H3z M6 3h4v1.5H6z" fill="#afb1b3"/><path d="M4 6.5h8V14.5H4z" fill="#afb1b3"/></svg>
<div class="abs" style="left:1px;top:100px;width:22px;height:22px;border-radius:3px;background:#5c6164"></div>
<svg style="left:4px;top:103px" width="16" height="16" viewBox="0 0 16 16"><path d="M2 5h4M2 8h4M2 12.5h12" stroke="#dfe1e3" stroke-width="1.5"/><path d="M10.5 2v7" stroke="#dfe1e3" stroke-width="1.5"/><path d="M7 6.5h7L10.5 10.5z" fill="#dfe1e3"/></svg>
<svg style="left:4px;top:129px" width="16" height="16" viewBox="0 0 16 16"><path d="M8 13.5V3.5M3.8 7.5L8 3.2L12.2 7.5" fill="none" stroke="#6e7275" stroke-width="1.3"/></svg>
<svg style="left:4px;top:155px" width="16" height="16" viewBox="0 0 16 16"><path d="M8 2.5V12.5M3.8 8.5L8 12.8L12.2 8.5" fill="none" stroke="#6e7275" stroke-width="1.3"/></svg>
</div>
</body></html>
